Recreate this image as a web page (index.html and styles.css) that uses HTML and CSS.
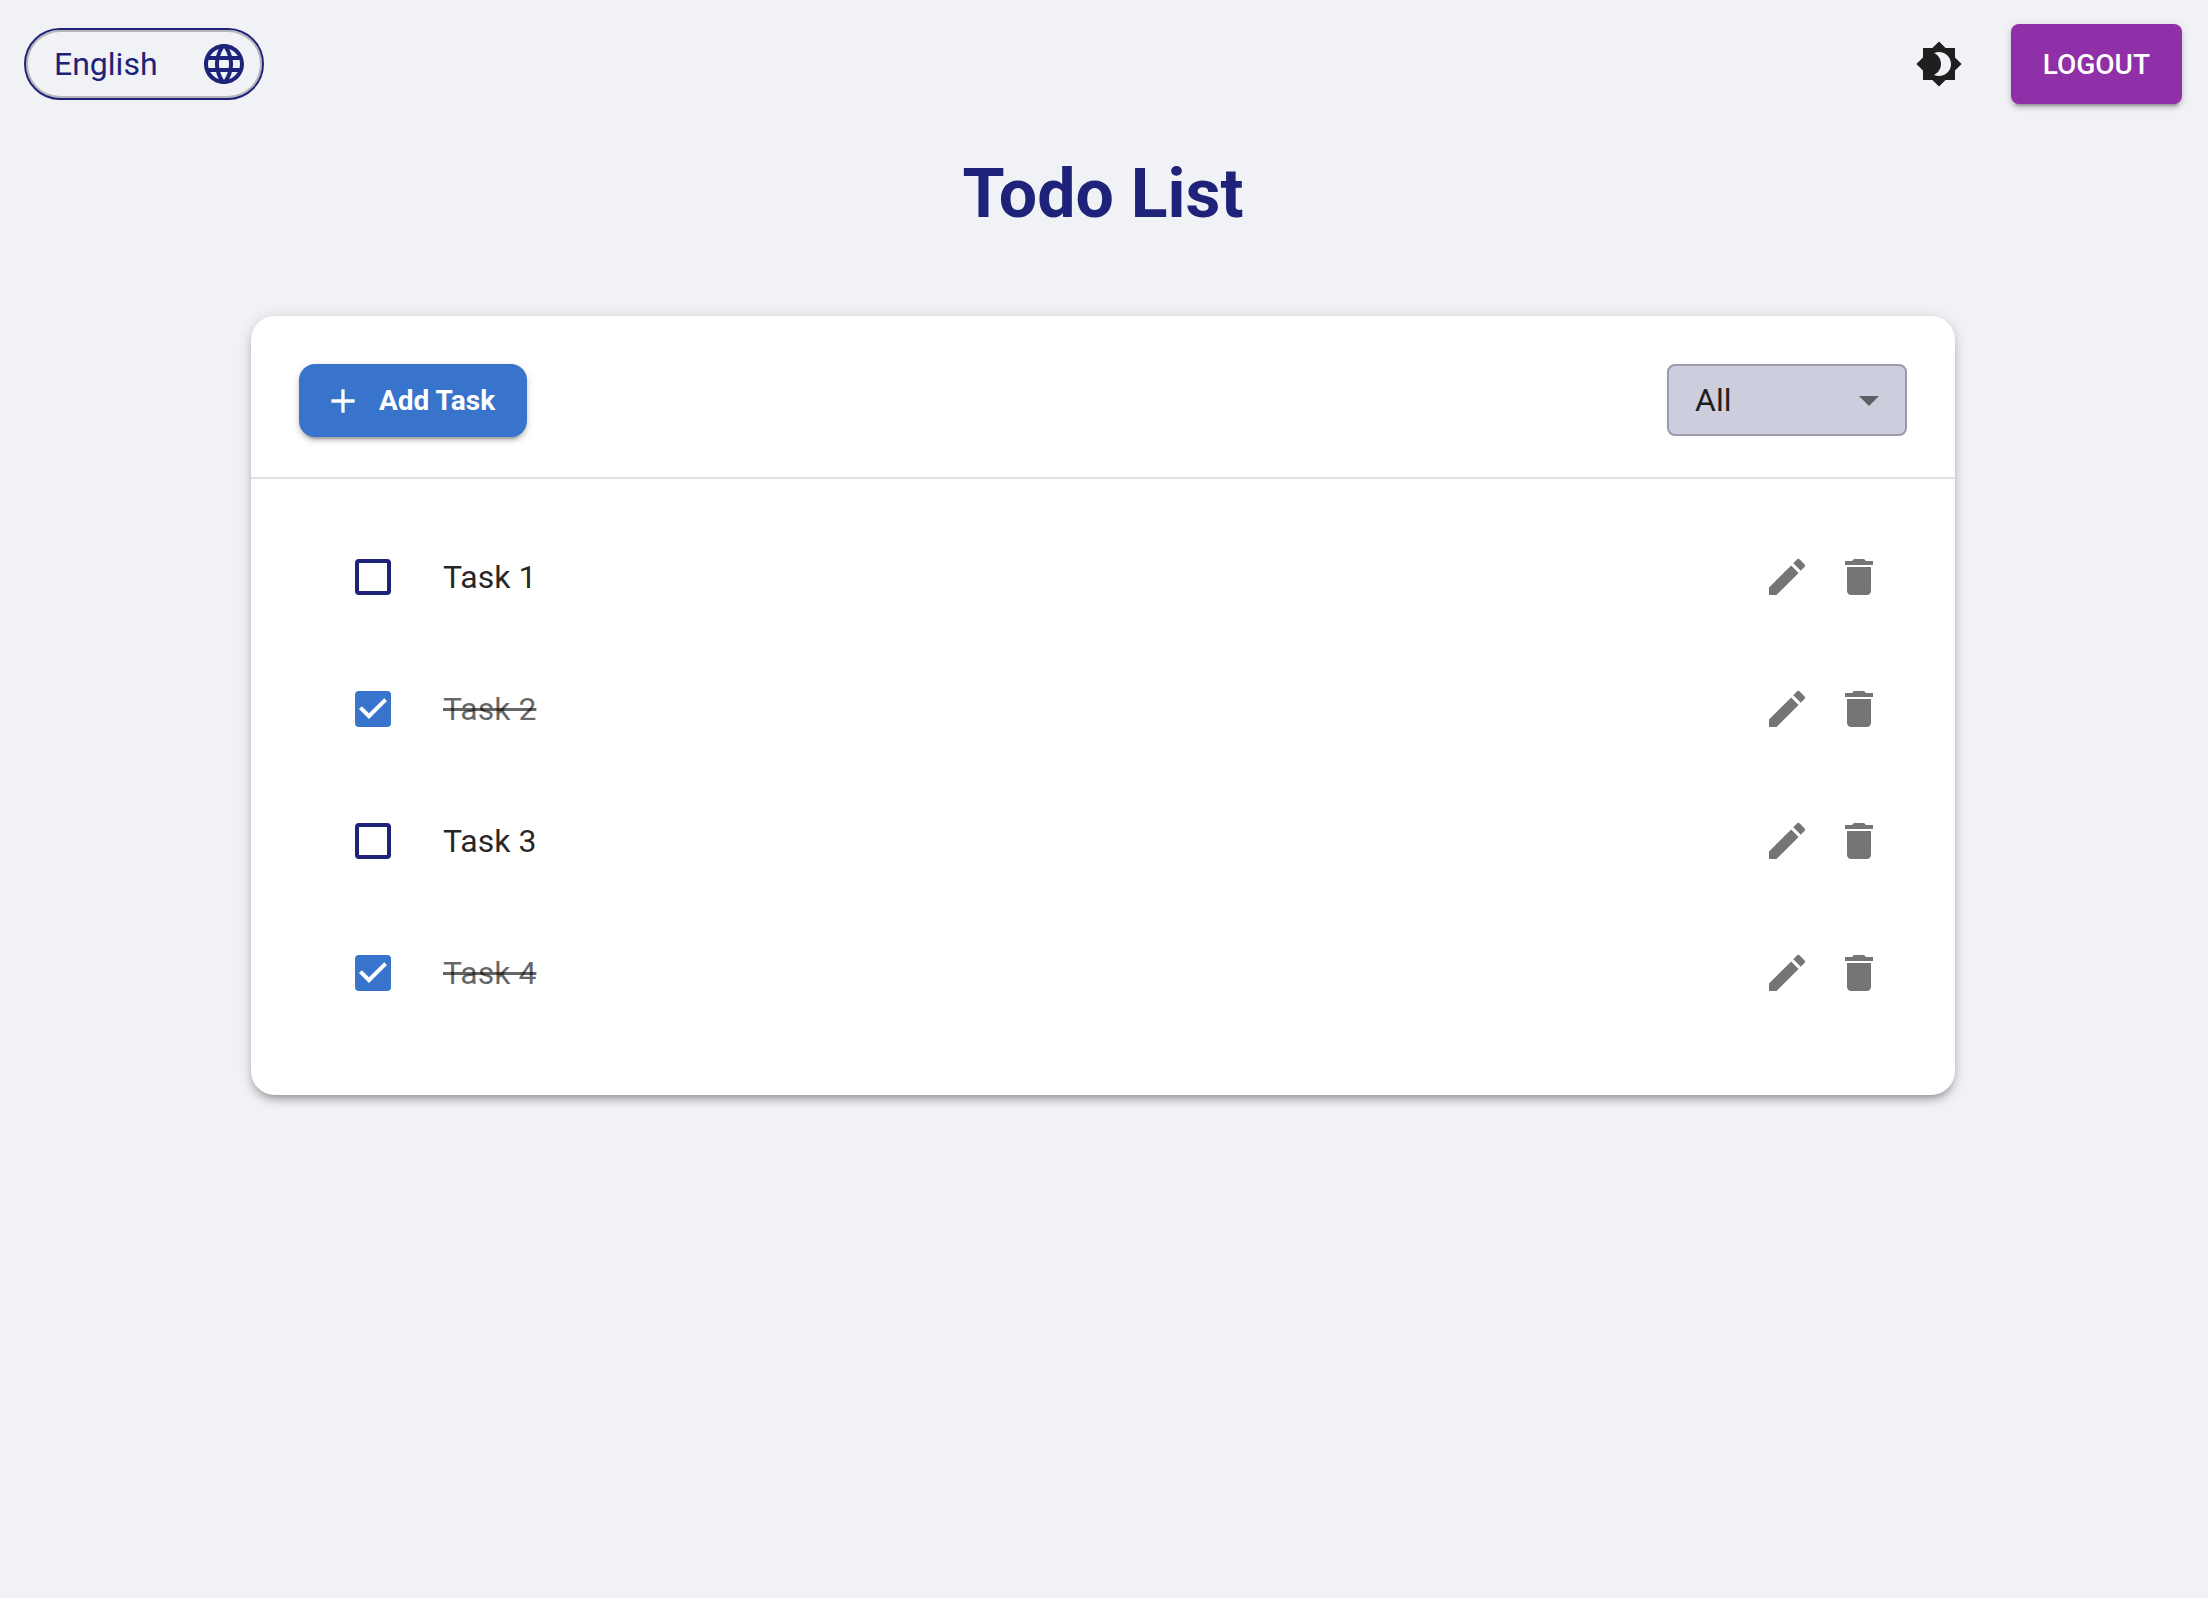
FILE: index.html
```html
<!DOCTYPE html>
<html lang="en">
<head>
<meta charset="utf-8">
<meta name="viewport" content="width=device-width, initial-scale=1">
<title>Todo List</title>
<link rel="stylesheet" href="styles.css">
</head>
<body>
<svg class="sprite" aria-hidden="true">
  <symbol id="edit" viewBox="0 0 24 24"><path d="M3 17.25V21h3.75L17.81 9.94l-3.75-3.75L3 17.25zM20.71 7.04c.39-.39.39-1.02 0-1.41l-2.34-2.34a.9959.9959 0 0 0-1.41 0l-1.83 1.83 3.75 3.75 1.83-1.83z"/></symbol>
  <symbol id="delete" viewBox="0 0 24 24"><path d="M6 19c0 1.100.9 2 2 2h8c1.100 0 2-.9 2-2V7H6v12zM19 4h-3.500l-1-1h-5l-1 1H5v2h14V4z"/></symbol>
</svg>
<header class="topbar">
  <select class="language" aria-label="Language">
    <option>English</option>
  </select>
  <div class="topbar-actions">
    <button class="icon-button theme-toggle" type="button" aria-label="Toggle theme">
      <svg class="icon" viewBox="0 0 24 24"><path d="M20 8.69V4h-4.690L12 .69 8.690 4H4v4.690L.69 12 4 15.310V20h4.690L12 23.310 15.310 20H20v-4.690L23.310 12 20 8.690zM12 18c-.89 0-1.740-.2-2.500-.55C11.560 16.500 13 14.420 13 12s-1.440-4.500-3.500-5.450C10.260 6.200 11.110 6 12 6c3.310 0 6 2.690 6 6s-2.690 6-6 6z"/></svg>
    </button>
    <button class="button logout" type="button">LOGOUT</button>
  </div>
</header>
<main class="page">
  <h1 class="title">Todo List</h1>
  <section class="card">
    <div class="toolbar">
      <button class="button add" type="button">
        <svg class="add-icon" viewBox="0 0 24 24"><path d="M19 13h-6v6h-2v-6H5v-2h6V5h2v6h6v2z"/></svg>
        Add Task
      </button>
      <select class="filter" aria-label="Filter tasks">
        <option>All</option>
      </select>
    </div>
    <ul class="tasks">
      <li class="task">
        <input class="check" type="checkbox" id="task-1">
        <label class="name" for="task-1">Task 1</label>
        <button class="icon-button" type="button" aria-label="Edit Task 1"><svg class="icon"><use href="#edit"/></svg></button>
        <button class="icon-button" type="button" aria-label="Delete Task 1"><svg class="icon"><use href="#delete"/></svg></button>
      </li>
      <li class="task">
        <input class="check" type="checkbox" id="task-2" checked>
        <label class="name" for="task-2">Task 2</label>
        <button class="icon-button" type="button" aria-label="Edit Task 2"><svg class="icon"><use href="#edit"/></svg></button>
        <button class="icon-button" type="button" aria-label="Delete Task 2"><svg class="icon"><use href="#delete"/></svg></button>
      </li>
      <li class="task">
        <input class="check" type="checkbox" id="task-3">
        <label class="name" for="task-3">Task 3</label>
        <button class="icon-button" type="button" aria-label="Edit Task 3"><svg class="icon"><use href="#edit"/></svg></button>
        <button class="icon-button" type="button" aria-label="Delete Task 3"><svg class="icon"><use href="#delete"/></svg></button>
      </li>
      <li class="task">
        <input class="check" type="checkbox" id="task-4" checked>
        <label class="name" for="task-4">Task 4</label>
        <button class="icon-button" type="button" aria-label="Edit Task 4"><svg class="icon"><use href="#edit"/></svg></button>
        <button class="icon-button" type="button" aria-label="Delete Task 4"><svg class="icon"><use href="#delete"/></svg></button>
      </li>
    </ul>
  </section>
</main>
</body>
</html>
```
FILE: styles.css
```css
:root {
  --navy: #1e2379;
  --blue: #3874cb;
  --purple: #8f30a8;
  --ink: rgba(0, 0, 0, 0.87);
}

* {
  box-sizing: border-box;
}

body {
  margin: 0;
  padding-right: 2px;
  min-height: 100vh;
  background: #f0f2f6;
  color: var(--ink);
  font-family: Roboto, "Liberation Sans", sans-serif;
  font-size: 32px;
}

button,
select {
  margin: 0;
  font-family: inherit;
  cursor: pointer;
}

.sprite {
  display: none;
}

.topbar {
  display: flex;
  align-items: center;
  justify-content: space-between;
  padding: 24px;
}

.topbar-actions {
  display: flex;
  align-items: center;
  gap: 32px;
}

.language,
.filter {
  appearance: none;
  width: 240px;
  height: 72px;
  font-size: 32px;
  background-repeat: no-repeat;
  background-size: 48px 48px;
}

.language {
  padding: 0 28px;
  border: 2px solid var(--navy);
  border-radius: 36px;
  box-shadow: inset 0 0 0 2px #b6b7ba;
  color: var(--navy);
  background-color: transparent;
  background-position: right 14px center;
  background-image: url("data:image/svg+xml,%3Csvg xmlns='http://www.w3.org/2000/svg' viewBox='0 0 24 24'%3E%3Cpath fill='%231e2379' d='M11.990 2C6.470 2 2 6.480 2 12s4.470 10 9.990 10C17.520 22 22 17.520 22 12S17.520 2 11.990 2zm6.930 6h-2.950c-.32-1.250-.78-2.450-1.380-3.560 1.840.63 3.370 1.910 4.330 3.560zM12 4.040c.83 1.200 1.480 2.530 1.910 3.960h-3.820c.43-1.430 1.080-2.760 1.910-3.960zM4.260 14C4.100 13.360 4 12.690 4 12s.1-1.360.26-2h3.380c-.08.66-.14 1.320-.14 2 0 .68.06 1.340.14 2H4.260zm.82 2h2.950c.32 1.250.78 2.450 1.380 3.560-1.840-.63-3.370-1.900-4.330-3.560zm2.950-8H5.080c.96-1.660 2.490-2.930 4.330-3.560C8.810 5.550 8.350 6.750 8.030 8zM12 19.960c-.83-1.200-1.480-2.530-1.910-3.960h3.820c-.43 1.430-1.080 2.760-1.910 3.960zM14.340 14H9.660c-.09-.66-.16-1.320-.16-2 0-.68.07-1.350.16-2h4.680c.09.65.16 1.320.16 2 0 .68-.07 1.340-.16 2zm.25 5.560c.6-1.110 1.060-2.310 1.380-3.560h2.950c-.96 1.650-2.490 2.930-4.330 3.560zM16.360 14c.08-.66.14-1.320.14-2 0-.68-.06-1.340-.14-2h3.380c.16.64.26 1.310.26 2s-.1 1.360-.26 2h-3.380z'/%3E%3C/svg%3E");
}

.filter {
  padding: 0 26px;
  border: 2px solid #9b9ba9;
  border-radius: 8px;
  color: #1f1f20;
  background-color: #cccddd;
  background-position: right 12px center;
  background-image: url("data:image/svg+xml,%3Csvg xmlns='http://www.w3.org/2000/svg' viewBox='0 0 24 24'%3E%3Cpath fill='%235e5e65' d='M7 10l5 5 5-5z'/%3E%3C/svg%3E");
}

.button {
  display: inline-flex;
  align-items: center;
  border: 0;
  padding: 0 32px;
  font-size: 28px;
  color: #fff;
  box-shadow:
    0 6px 2px -4px rgba(0, 0, 0, 0.2),
    0 4px 4px 0 rgba(0, 0, 0, 0.14),
    0 2px 10px 0 rgba(0, 0, 0, 0.12);
}

.logout {
  height: 80px;
  border-radius: 8px;
  font-weight: 500;
  background: var(--purple);
}

.add {
  height: 73px;
  padding-left: 24px;
  gap: 16px;
  border-radius: 16px;
  font-weight: 700;
  background: var(--blue);
}

.add-icon {
  width: 40px;
  height: 40px;
  fill: currentColor;
}

.icon-button {
  display: flex;
  border: 0;
  padding: 0;
  background: none;
  color: #757575;
}

.theme-toggle {
  padding: 16px;
  color: #1f1f20;
}

.icon {
  width: 48px;
  height: 48px;
  fill: currentColor;
}

.page {
  max-width: 1800px;
  margin: 0 auto;
  padding: 24px 48px 48px;
}

.title {
  margin: 0 0 80px;
  font-size: 68px;
  line-height: 84px;
  font-weight: 700;
  text-align: center;
  color: var(--navy);
}

.card {
  border-radius: 24px;
  background: #fff;
  box-shadow:
    0 6px 6px -4px rgba(0, 0, 0, 0.2),
    0 6px 8px 0 rgba(0, 0, 0, 0.14),
    0 2px 16px 0 rgba(0, 0, 0, 0.12);
}

.toolbar {
  display: flex;
  align-items: flex-start;
  justify-content: space-between;
  padding: 48px 48px 40px;
  border-bottom: 2px solid #e0e0e0;
}

.tasks {
  margin: 0;
  padding: 32px 72px 56px 104px;
  list-style: none;
}

.task {
  display: flex;
  align-items: center;
  gap: 24px;
  height: 132px;
}

.check {
  appearance: none;
  flex: none;
  width: 36px;
  height: 36px;
  margin: 0 28px 0 0;
  border: 4px solid var(--navy);
  border-radius: 4px;
  cursor: pointer;
}

.check:checked {
  border: 0;
  background: var(--blue) url("data:image/svg+xml,%3Csvg xmlns='http://www.w3.org/2000/svg' viewBox='3 3 18 18'%3E%3Cpath fill='white' d='M10 17l-5-5 1.410-1.410L10 14.170l7.590-7.590L19 8l-9 9z'/%3E%3C/svg%3E");
}

.name {
  flex: 1;
}

.check:checked + .name {
  color: rgba(0, 0, 0, 0.6);
  text-decoration: line-through;
}
```
